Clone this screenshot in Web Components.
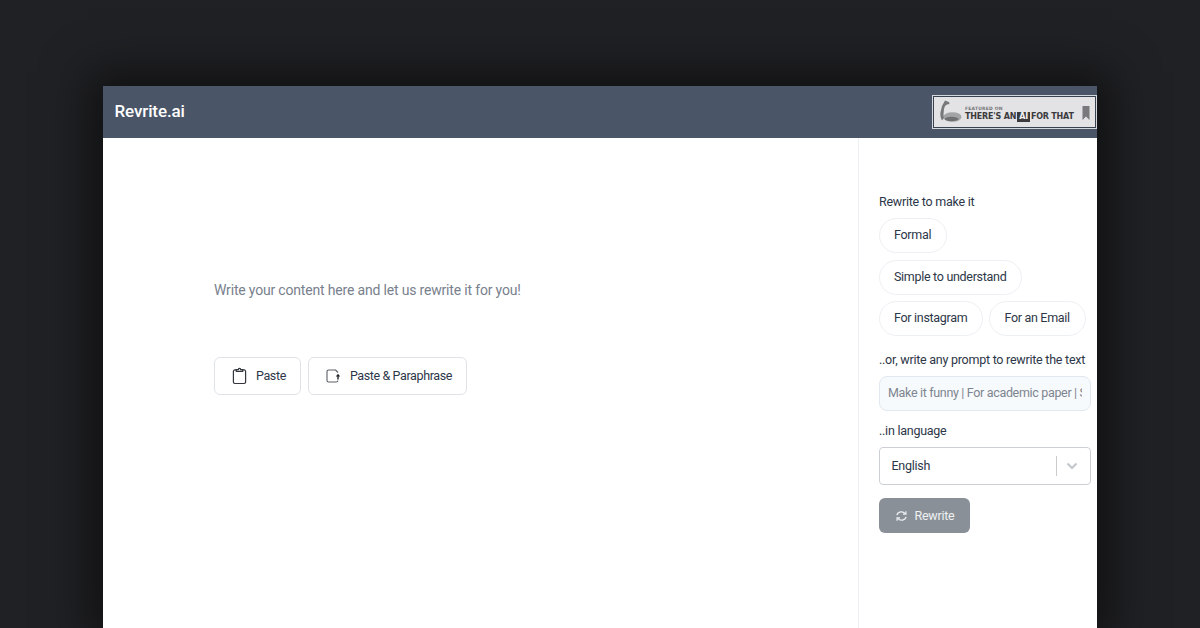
<!DOCTYPE html>
<html lang="en">
<head>
<meta charset="utf-8">
<title>Revrite.ai</title>
<style>
  html, body { margin: 0; height: 100%; overflow: hidden; }
  body {
    background: #202124;
    font-family: Roboto, "Liberation Sans", sans-serif;
    padding: 86px 103px 0;
    box-sizing: border-box;
    height: 628px;
  }
</style>
</head>
<body>
<app-window>
  <top-bar slot="top">
    <span slot="brand">Revrite.ai</span>
    <aift-badge slot="badge"></aift-badge>
  </top-bar>
  <editor-pane slot="main">
    <outline-button>
      <svg slot="icon" width="15" height="18" viewBox="0 0 16 18" fill="none" stroke="#33373d" stroke-width="1.3" stroke-linejoin="round"><path d="M4.5 2.5H3A1.5 1.500 0 0 0 1.500 4v11.500A1.500 1.500 0 0 0 3 17h10a1.500 1.500 0 0 0 1.500-1.500V4A1.500 1.500 0 0 0 13 2.500h-1.500"/><path d="M4.500 4V2.200h2.200a1.300 1.300 0 0 1 2.600 0h2.200V4z"/></svg>
      Paste
    </outline-button>
    <outline-button>
      <svg slot="icon" width="15" height="14" viewBox="0 0 15 14" fill="none" stroke="#5a5e65" stroke-width="1.100" stroke-linejoin="round"><path d="M12 3.500L9.500 1H2.500A1.500 1.500 0 0 0 1 2.500v9A1.500 1.500 0 0 0 2.500 13h7.500a1.500 1.500 0 0 0 1.800-1.500"/><path d="M12 10.500V7" stroke="#22252a" stroke-width="1.400"/><path d="M9.800 7.500L12 4.800l2.200 2.700z" fill="#22252a" stroke="none"/></svg>
      Paste &amp; Paraphrase
    </outline-button>
  </editor-pane>
  <side-panel slot="side"></side-panel>
</app-window>

<script>
class AppWindow extends HTMLElement {
  constructor() {
    super();
    this.attachShadow({ mode: 'open' });
    this.shadowRoot.innerHTML = `
      <style>
        :host {
          display: flex;
          flex-direction: column;
          height: 542px;
          background: #fff;
          box-shadow: 0 0 42px 14px rgba(0,0,0,0.5);
        }
        #body { display: flex; flex: 1; min-height: 0; }
        ::slotted([slot=main]) { flex: 0 0 756px; }
        ::slotted([slot=side]) { flex: 1; min-width: 0; }
      </style>
      <slot name="top"></slot>
      <div id="body"><slot name="main"></slot><slot name="side"></slot></div>
    `;
  }
}
customElements.define('app-window', AppWindow);

class TopBar extends HTMLElement {
  constructor() {
    super();
    this.attachShadow({ mode: 'open' });
    this.shadowRoot.innerHTML = `
      <style>
        :host {
          display: flex;
          align-items: center;
          justify-content: space-between;
          height: 52px;
          flex: none;
          box-sizing: border-box;
          padding: 0 0 1px 12px;
          background: #4a5568;
          color: #fff;
        }
        #brand { font-size: 17px; font-weight: 500; letter-spacing: -0.12px; margin: -2px 0 0 -0.5px; }
      </style>
      <div id="brand"><slot name="brand"></slot></div>
      <slot name="badge"></slot>
    `;
  }
}
customElements.define('top-bar', TopBar);

class AiftBadge extends HTMLElement {
  constructor() {
    super();
    this.attachShadow({ mode: 'open' });
    this.shadowRoot.innerHTML = `
      <style>
        :host {
          display: flex;
          align-items: center;
          width: 165px;
          height: 34px;
          box-sizing: border-box;
          margin-top: 1px;
          padding: 0 6px 0 6px;
          gap: 3px;
          background: #e3e3e5;
          border: 1px solid #d5d8de;
          outline: 1px solid #39424f;
          outline-offset: -2px;
          color: #3b3b3d;
        }
        #txt { flex: 1; display: flex; flex-direction: column; margin-top: 3px; font-family: "DejaVu Sans", sans-serif; white-space: nowrap; }
        #small { font-size: 4.500px; font-weight: 700; color: #77777a; line-height: 6px; letter-spacing: .2px; }
        #big { font-size: 8px; font-weight: 700; line-height: 10px; letter-spacing: -0.2px; }
        #big b { display: inline-block; background: #3b3b3d; color: #f2f2f2; padding: 0 2px; margin: 0 1px; line-height: 10px; }
        #mark { margin-top: 1px; }
      </style>
      <svg width="23" height="24" viewBox="0 0 23 24">
        <path d="M6 .5l4 1.500.5 2-2.500.5-2 1.500-1 3-.5 5c0 1.500.3 2.500 1 3.500l-2.500 3C1.500 18 1 15 1.500 12l1.500-6z" fill="#77797a"/>
        <ellipse cx="13.500" cy="17" rx="9" ry="4.800" fill="#a3a4a5"/>
        <ellipse cx="12.500" cy="19" rx="7" ry="2.200" fill="#6f7072"/>
      </svg>
      <div id="txt">
        <span id="small">FEATURED ON</span>
        <span id="big">THERE'S AN<b>AI</b>FOR THAT</span>
      </div>
      <svg id="mark" width="8" height="14" viewBox="0 0 8 14"><path d="M0.500 0h7v14L4 10.500.5 14z" fill="#77797c"/></svg>
    `;
  }
}
customElements.define('aift-badge', AiftBadge);

class EditorPane extends HTMLElement {
  constructor() {
    super();
    this.attachShadow({ mode: 'open' });
    this.shadowRoot.innerHTML = `
      <style>
        :host {
          display: block;
          box-sizing: border-box;
          padding: 142px 20px 0 111px;
          border-right: 1px solid #edf0f3;
        }
        #hint { font-size: 14px; line-height: 20px; color: #78818d; letter-spacing: -0.18px; }
        #actions { display: flex; gap: 7px; margin-top: 57px; }
      </style>
      <div id="hint">Write your content here and let us rewrite it for you!</div>
      <div id="actions"><slot></slot></div>
    `;
  }
}
customElements.define('editor-pane', EditorPane);

class OutlineButton extends HTMLElement {
  constructor() {
    super();
    this.attachShadow({ mode: 'open' });
    this.shadowRoot.innerHTML = `
      <style>
        :host {
          display: inline-flex;
          align-items: center;
          gap: 9px;
          height: 38px;
          box-sizing: border-box;
          padding: 0 14px 1px 17px;
          border: 1px solid #dfe3e8;
          border-radius: 6px;
          font-size: 12.500px;
          letter-spacing: -0.38px;
          color: #2d3748;
          white-space: nowrap;
        }
      </style>
      <slot name="icon"></slot><span><slot></slot></span>
    `;
  }
}
customElements.define('outline-button', OutlineButton);

class TagPill extends HTMLElement {
  constructor() {
    super();
    this.attachShadow({ mode: 'open' });
    this.shadowRoot.innerHTML = `
      <style>
        :host {
          display: inline-flex;
          align-items: center;
          height: 35px;
          box-sizing: border-box;
          padding: 0 15px 2px 14px;
          border: 1px solid #edf0f3;
          border-radius: 18px;
          font-size: 12.500px;
          letter-spacing: -0.3px;
          color: #2d3748;
          white-space: nowrap;
        }
      </style>
      <slot></slot>
    `;
  }
}
customElements.define('tag-pill', TagPill);

class SidePanel extends HTMLElement {
  constructor() {
    super();
    this.attachShadow({ mode: 'open' });
    this.shadowRoot.innerHTML = `
      <style>
        :host {
          display: block;
          box-sizing: border-box;
          padding: 56px 6px 0 20px;
          color: #2d3748;
          font-size: 12.500px;
          letter-spacing: -0.25px;
        }
        label { display: block; line-height: 16px; white-space: nowrap; }
        #pills { display: flex; flex-direction: column; gap: 6.500px; margin: 8px 0 16px; }
        .row { display: flex; gap: 6px; white-space: nowrap; }
        input {
          display: block;
          width: 100%;
          height: 35px;
          box-sizing: border-box;
          margin: 8px 0 12px;
          padding: 0 8px 2px 8px;
          border: 1px solid #e2e8f0;
          border-radius: 8px;
          background: #f7fafc;
          font: inherit;
          letter-spacing: -0.33px;
          outline: none;
        }
        input::placeholder { color: #7d8590; opacity: 1; }
        #select {
          display: flex;
          align-items: center;
          height: 38px;
          box-sizing: border-box;
          margin: 8px 0 13px;
          padding: 0 12px 0 12px;
          border: 1px solid #ccd0d5;
          border-radius: 4px;
        }
        #select span { flex: 1; margin: -2px 0 0 -0.5px; }
        #select i { width: 1px; height: 20px; background: #cccccc; margin-right: 9px; }
        #go {
          display: inline-flex;
          align-items: center;
          gap: 7px;
          height: 35px;
          width: 91px;
          box-sizing: border-box;
          justify-content: center;
          background: #8a9098;
          color: #eef0f2;
          border-radius: 6px;
        }
      </style>
      <label>Rewrite to make it</label>
      <div id="pills">
        <div class="row"><tag-pill>Formal</tag-pill></div>
        <div class="row"><tag-pill>Simple to understand</tag-pill></div>
        <div class="row"><tag-pill>For instagram</tag-pill><tag-pill>For an Email</tag-pill></div>
      </div>
      <label>..or, write any prompt to rewrite the text</label>
      <input placeholder="Make it funny | For academic paper | Summarize it">
      <label>..in language</label>
      <div id="select">
        <span>English</span><i></i>
        <svg width="12" height="8" viewBox="0 0 12 8" fill="none" stroke="#c4c7cb" stroke-width="2"><path d="M1.500 1.500L6 6l4.500-4.500"/></svg>
      </div>
      <div id="go">
        <svg width="13" height="12" viewBox="0 0 14 12" fill="none" stroke="#eef0f2" stroke-width="1.300"><path d="M2 5a5 4.500 0 0 1 9-1.500"/><path d="M12 7a5 4.500 0 0 1-9 1.500"/><path d="M11.800.8v3.200H8.600M2.200 11.200V8h3.200"/></svg>
        Rewrite
      </div>
    `;
  }
}
customElements.define('side-panel', SidePanel);
</script>
</body>
</html>
